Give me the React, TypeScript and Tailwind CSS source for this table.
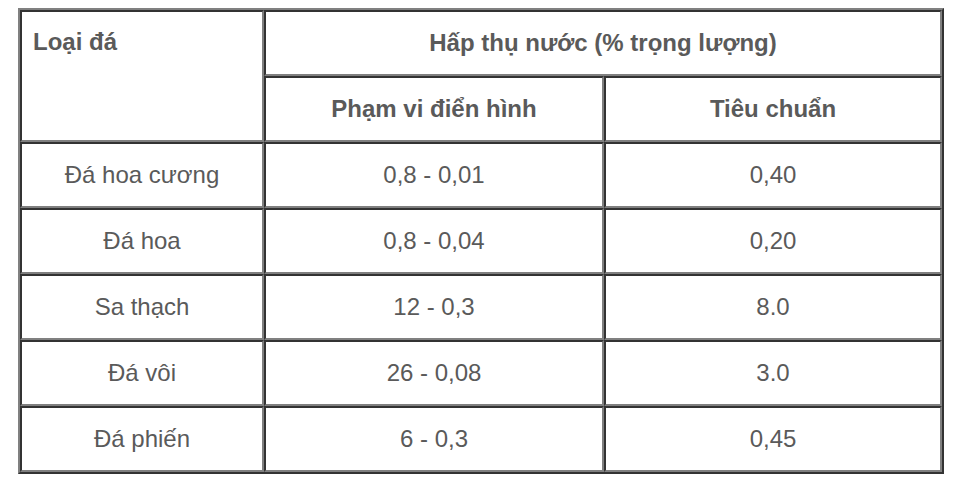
import React from "react";

const rows = [
  ["Đá hoa cương", "0,8 - 0,01", "0,40"],
  ["Đá hoa", "0,8 - 0,04", "0,20"],
  ["Sa thạch", "12 - 0,3", "8.0"],
  ["Đá vôi", "26 - 0,08", "3.0"],
  ["Đá phiến", "6 - 0,3", "0,45"],
];

const cell =
  "border-2 border-t-[#333333] border-l-[#333333] border-b-[#808080] border-r-[#808080] text-center align-middle";

export default function App() {
  return (
    <div className="bg-white w-[966px] h-[482px] pt-[8px] pl-[18px]" style={{ fontFamily: '"Liberation Sans", Arial, sans-serif' }}>
      <table className="border-separate border-spacing-0 w-[926px] table-fixed border-2 border-t-[#808080] border-l-[#808080] border-b-[#333333] border-r-[#333333] text-[24px] leading-[28px] text-[#5a5a5a]">
        <colgroup>
          <col className="w-[244px]" />
          <col className="w-[340px]" />
          <col className="w-[338px]" />
        </colgroup>
        <tbody>
          <tr className="h-[66px]">
            <td rowSpan={2} className="border-2 border-t-[#333333] border-l-[#333333] border-b-[#808080] border-r-[#808080] text-left align-top pl-[11px] pt-[16px] font-bold">
              Loại đá
            </td>
            <td colSpan={2} className={cell + " font-bold"}>
              Hấp thụ nước (% trọng lượng)
            </td>
          </tr>
          <tr className="h-[66px]">
            <td className={cell + " font-bold"}>Phạm vi điển hình</td>
            <td className={cell + " font-bold"}>Tiêu chuẩn</td>
          </tr>
          {rows.map((r, i) => (
            <tr key={i} className="h-[66px]">
              <td className={cell}>{r[0]}</td>
              <td className={cell}>{r[1]}</td>
              <td className={cell}>{r[2]}</td>
            </tr>
          ))}
        </tbody>
      </table>
    </div>
  );
}
